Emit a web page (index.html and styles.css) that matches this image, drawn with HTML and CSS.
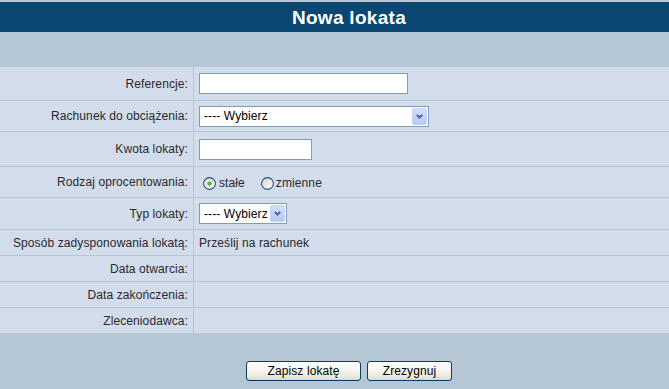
FILE: index.html
```html
<!DOCTYPE html>
<html lang="pl">
<head>
<meta charset="utf-8">
<title>Nowa lokata</title>
<link rel="stylesheet" href="styles.css">
</head>
<body>
<div class="page">
  <div class="title-bar"><h1 class="title">Nowa lokata</h1></div>
  <div class="band"></div>
  <div class="form">
    <div class="lbl">Referencje:</div>
    <div class="val"><input class="txt txt-ref" type="text"></div>

    <div class="lbl">Rachunek do obciążenia:</div>
    <div class="val">
      <div class="sel sel-account"><span class="sel-text">---- Wybierz</span><span class="sel-btn"><svg width="7" height="5" viewBox="0 0 7 5"><path d="M0.8 0.8 L3.5 3.6 L6.2 0.8" fill="none" stroke="#4d6185" stroke-width="1.9"/></svg></span></div>
    </div>

    <div class="lbl">Kwota lokaty:</div>
    <div class="val"><input class="txt txt-amount" type="text"></div>

    <div class="lbl">Rodzaj oprocentowania:</div>
    <div class="val radios">
      <label class="radio"><svg class="radio-ico" width="13" height="13" viewBox="0 0 13 13"><defs><linearGradient id="rg1" x1="0" y1="0" x2="1" y2="1"><stop offset="0" stop-color="#dcdad3"/><stop offset="1" stop-color="#ffffff"/></linearGradient><radialGradient id="dot" cx="0.4" cy="0.4" r="0.6"><stop offset="0" stop-color="#5ad15a"/><stop offset="1" stop-color="#1c9a1c"/></radialGradient></defs><circle cx="6.5" cy="6.5" r="5.9" fill="url(#rg1)" stroke="#2a4d70" stroke-width="1.1"/><circle cx="6.5" cy="6.5" r="2.1" fill="url(#dot)"/></svg><span>stałe</span></label>
      <label class="radio"><svg class="radio-ico" width="13" height="13" viewBox="0 0 13 13"><defs><linearGradient id="rg2" x1="0" y1="0" x2="1" y2="1"><stop offset="0" stop-color="#d4d2cb"/><stop offset="1" stop-color="#ffffff"/></linearGradient></defs><circle cx="6.5" cy="6.5" r="5.9" fill="url(#rg2)" stroke="#2a4d70" stroke-width="1.1"/></svg><span>zmienne</span></label>
    </div>

    <div class="lbl">Typ lokaty:</div>
    <div class="val">
      <div class="sel sel-type"><span class="sel-text">---- Wybierz</span><span class="sel-btn"><svg width="7" height="5" viewBox="0 0 7 5"><path d="M0.8 0.8 L3.5 3.6 L6.2 0.8" fill="none" stroke="#4d6185" stroke-width="1.9"/></svg></span></div>
    </div>

    <div class="lbl">Sposób zadysponowania lokatą:</div>
    <div class="val">Prześlij na rachunek</div>

    <div class="lbl">Data otwarcia:</div>
    <div class="val"></div>

    <div class="lbl">Data zakończenia:</div>
    <div class="val"></div>

    <div class="lbl">Zleceniodawca:</div>
    <div class="val"></div>
  </div>
  <div class="actions">
    <button class="btn btn-save" type="button">Zapisz lokatę</button>
    <button class="btn btn-cancel" type="button">Zrezygnuj</button>
  </div>
</div>
</body>
</html>
```

FILE: styles.css
```css
html, body {
  margin: 0;
  padding: 0;
}

body {
  background: #b5c6d4;
  overflow: hidden;
  font-family: "Liberation Sans", Arial, sans-serif;
  font-size: 12px;
  color: #2a2a2a;
}

.page {
  width: 698px;
  padding-top: 2px;
}

.title-bar {
  height: 30px;
  background: #0b4771;
  display: flex;
  align-items: center;
  justify-content: center;
}

.title {
  margin: 0;
  font-size: 19px;
  font-weight: bold;
  letter-spacing: 0.3px;
  color: #ffffff;
  line-height: 1;
}

.band {
  height: 35px;
  background: #b5c6d4;
}

.form {
  display: grid;
  grid-template-columns: 193px 1fr;
  grid-template-rows: 33px 30px 34px 30px 31px 25px 25px 25px 25px;
  column-gap: 1px;
  row-gap: 1px;
  background: #b5c6d4;
}

.lbl,
.val {
  background: #d2dcea;
  display: flex;
  align-items: center;
  letter-spacing: 0.1px;
}

.lbl {
  justify-content: flex-end;
  padding-right: 5px;
  text-align: right;
  white-space: nowrap;
}

.val {
  padding-left: 5px;
}

.txt {
  box-sizing: border-box;
  height: 21px;
  margin: 0;
  padding: 1px 3px;
  border: 1px solid #7f9db9;
  background: #ffffff;
  font: 12px "Liberation Sans", Arial, sans-serif;
  outline: none;
}

.txt-ref {
  width: 209px;
}

.txt-amount {
  width: 113px;
}

.sel {
  box-sizing: border-box;
  height: 21px;
  border: 1px solid #7f9db9;
  background: #ffffff;
  display: flex;
  align-items: center;
  padding: 1px;
  color: #000000;
}

.sel-account {
  width: 230px;
}

.sel-type {
  width: 88px;
}

.sel-text {
  flex: 1;
  padding-left: 3px;
  white-space: nowrap;
  overflow: hidden;
}

.sel-btn {
  box-sizing: border-box;
  width: 15px;
  height: 17px;
  border: 1px solid #c3d3f8;
  border-radius: 2px;
  background: linear-gradient(#d2defd, #b5c8f6);
  display: flex;
  align-items: center;
  justify-content: center;
}

.radios {
  gap: 16px;
  padding-left: 9px;
  padding-top: 2px;
}

.radio {
  display: flex;
  align-items: center;
  gap: 3px;
}

.radio + .radio {
  gap: 2px;
}

.radio-ico {
  display: block;
}

.actions {
  display: flex;
  justify-content: center;
  gap: 6px;
  padding-top: 28px;
  height: 40px;
}

.btn {
  box-sizing: border-box;
  height: 20px;
  margin: 0;
  padding: 0;
  border: 1px solid #0f3a66;
  border-radius: 3px;
  background: linear-gradient(#ffffff 0%, #f4f3ee 50%, #e9e6dc 85%, #d8d3c6 100%);
  font: 12px "Liberation Sans", Arial, sans-serif;
  letter-spacing: 0.1px;
  color: #000000;
}

.btn-save {
  width: 115px;
}

.btn-cancel {
  width: 85px;
}
```
